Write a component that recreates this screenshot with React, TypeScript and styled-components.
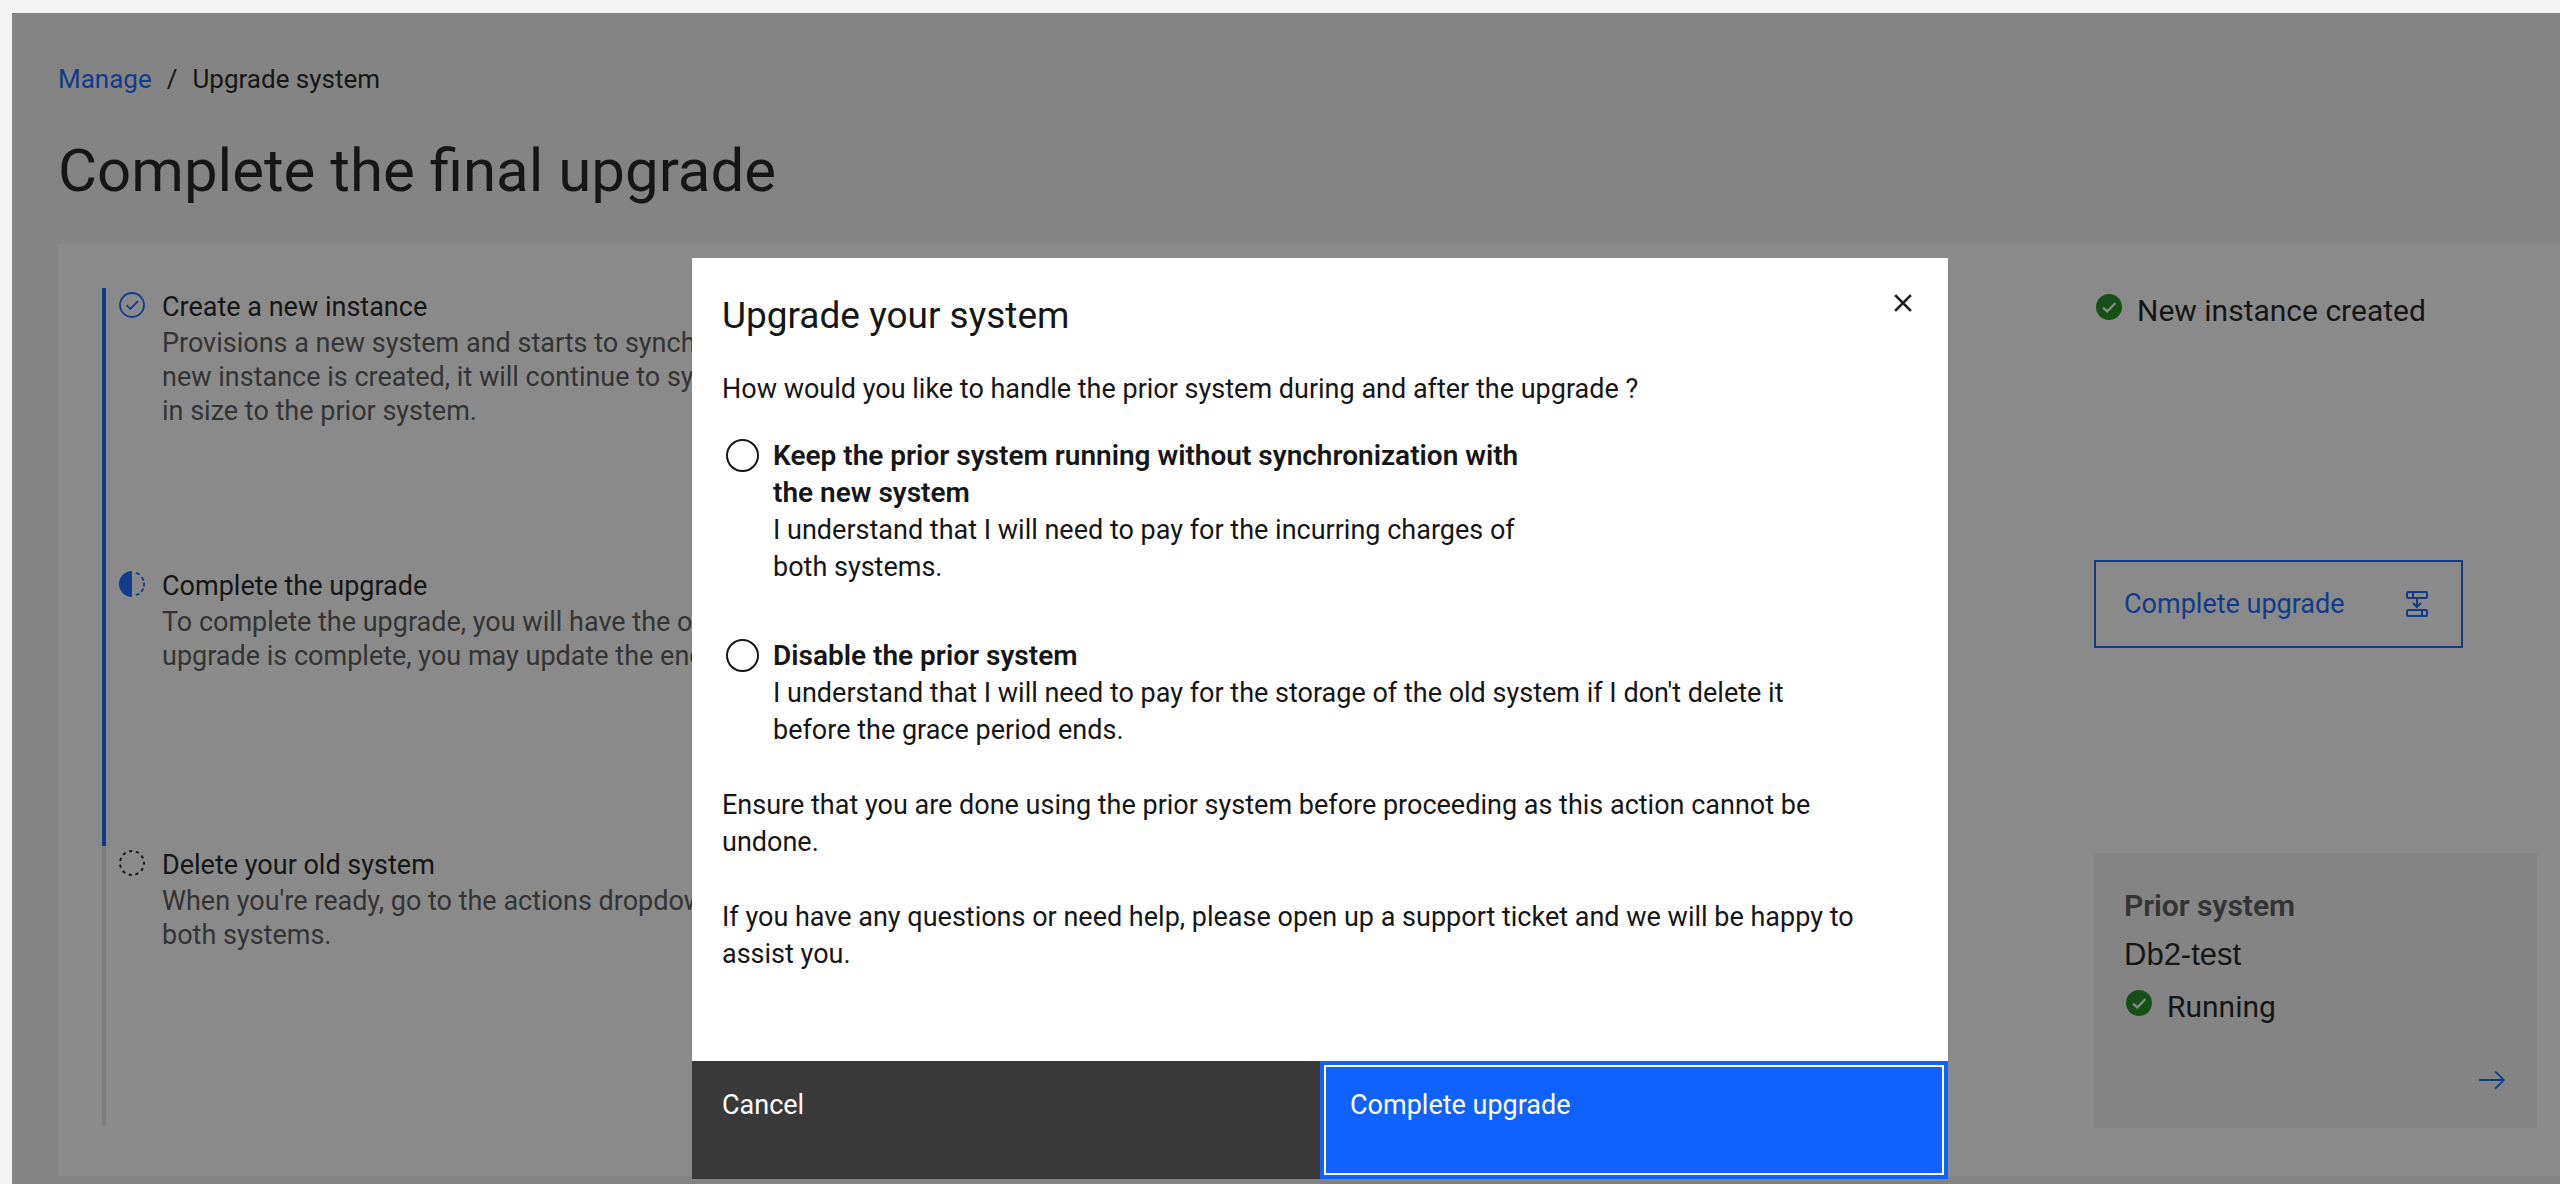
import React from 'react';
import styled, { createGlobalStyle } from 'styled-components';

const GlobalStyle = createGlobalStyle`
  *, *::before, *::after {
    box-sizing: border-box;
  }
  body {
    margin: 0;
    background: #f3f3f3;
    color: #161616;
    font-family: Roboto, 'Noto Sans', sans-serif;
    font-size: 27px;
    line-height: 37px;
  }
  h1, h2, h3, p, ol, fieldset {
    margin: 0;
    padding: 0;
    border: 0;
  }
  button, input {
    font: inherit;
    color: inherit;
    margin: 0;
    border-radius: 0;
  }
  svg {
    display: block;
    flex: none;
  }
`;

const Shell = styled.div`
  padding: 13px 0 0 12px;
`;

const Stage = styled.div`
  position: relative;
  overflow: hidden;
  background: #f3f3f3;
`;

const Page = styled.main`
  display: flex;
  flex-direction: column;
  min-height: calc(100vh - 13px);
  padding: 48px 0 0 46px;
`;

const Breadcrumb = styled.nav`
  display: flex;
  gap: 15px;
  font-size: 26px;
`;

const BreadcrumbLink = styled.a`
  color: #0f62fe;
  text-decoration: none;
`;

const PageTitle = styled.h1`
  margin: 35px 0;
  font-size: 60px;
  font-weight: 400;
  line-height: 76px;
`;

const Panel = styled.section`
  display: grid;
  grid-template-columns: minmax(0, 1fr) 466px;
  padding: 44px 0 48px 44px;
  background: #ffffff;
`;

const NextPanel = styled.section`
  flex: 1;
  margin-top: 9px;
  background: #ffffff;
`;

const Steps = styled.ol`
  list-style: none;
`;

const Step = styled.li<{ $reached: boolean }>`
  display: flex;
  gap: 17px;
  min-height: 279px;
  padding: 2px 0 0 13px;
  border-left: 4px solid ${(p) => (p.$reached ? '#0f62fe' : '#e0e0e0')};
`;

const StepIcon = styled.svg`
  width: 26px;
  height: 26px;
  margin-top: 2px;
`;

const StepTitle = styled.h2`
  margin-bottom: 2px;
  font-size: 27px;
  font-weight: 400;
  line-height: 34px;
`;

const StepLine = styled.span`
  display: block;
  color: #525252;
  line-height: 34px;
  white-space: nowrap;
`;

const Actions = styled.div`
  display: grid;
  grid-template-rows: 272px 293px auto;
  align-items: start;
  padding-right: 23px;
`;

const Status = styled.p`
  display: flex;
  gap: 15px;
  padding: 3px 0 0 2px;
  font-size: 30px;
  line-height: 40px;
`;

const StatusIcon = styled.svg`
  width: 26px;
  height: 26px;
  margin-top: 3px;
`;

const OutlineButton = styled.button`
  display: flex;
  align-items: center;
  justify-content: space-between;
  width: 369px;
  height: 88px;
  padding: 0 32px 0 28px;
  border: 2px solid #0f62fe;
  background: transparent;
  color: #0f62fe;
`;

const SystemCard = styled.article`
  display: flex;
  flex-direction: column;
  padding: 33px 30px;
  background: #f3f3f3;
`;

const CardLabel = styled.h3`
  color: #525252;
  font-size: 30px;
  font-weight: 600;
  line-height: 40px;
`;

const SystemName = styled.p`
  margin: 9px 0;
  font-family: 'Liberation Sans', Arial, sans-serif;
  font-size: 31px;
  line-height: 40px;
`;

const CardLink = styled.a`
  align-self: flex-end;
  margin-top: 38px;
  color: #0f62fe;
`;

const Overlay = styled.div`
  position: absolute;
  inset: 0;
  display: grid;
  grid-template-columns: 680fr 1256fr 612fr;
  align-items: start;
  padding-top: 245px;
  background: rgba(22, 22, 22, 0.5);
`;

const Dialog = styled.div`
  grid-column: 2;
  background: #ffffff;
`;

const DialogHeader = styled.header`
  display: flex;
  align-items: flex-start;
  justify-content: space-between;
  padding: 28px 28px 33px 30px;
`;

const DialogTitle = styled.h2`
  padding-top: 8px;
  font-size: 37px;
  font-weight: 400;
  line-height: 44px;
`;

const CloseButton = styled.button`
  padding: 0;
  border: 0;
  background: transparent;
`;

const DialogBody = styled.div`
  padding: 0 70px 88px 30px;
`;

const Options = styled.fieldset`
  display: grid;
  gap: 51px;
  margin-bottom: 38px;
`;

const Question = styled.legend`
  margin-bottom: 29px;
  padding: 0;
`;

const Option = styled.label<{ $width: number }>`
  display: flex;
  gap: 14px;
  max-width: ${(p) => p.$width}px;
  padding-left: 4px;
`;

const Radio = styled.input`
  flex: none;
  appearance: none;
  width: 33px;
  height: 33px;
  margin-top: 2px;
  border: 2px solid #161616;
  border-radius: 50%;

  &:checked {
    box-shadow: inset 0 0 0 7px #ffffff;
    background: #161616;
  }
`;

const OptionTitle = styled.strong`
  display: block;
  margin-bottom: 1px;
  font-size: 28px;
  font-weight: 600;
`;

const Note = styled.p`
  & + & {
    margin-top: 38px;
  }
`;

const DialogFooter = styled.footer`
  display: grid;
  grid-template-columns: 1fr 1fr;
`;

const FooterButton = styled.button<{ $primary?: boolean }>`
  height: 118px;
  padding: 26px 30px 55px;
  border: 0;
  background: ${(p) => (p.$primary ? '#0f62fe' : '#393939')};
  box-shadow: ${(p) => (p.$primary ? 'inset 0 0 0 4px #0f62fe, inset 0 0 0 6px #ffffff' : 'none')};
  color: #ffffff;
  text-align: left;
`;

type StepState = 'complete' | 'current' | 'upcoming';

const steps: { state: StepState; title: string; lines: string[] }[] = [
  {
    state: 'complete',
    title: 'Create a new instance',
    lines: [
      'Provisions a new system and starts to synchronize',
      'new instance is created, it will continue to sync',
      'in size to the prior system.',
    ],
  },
  {
    state: 'current',
    title: 'Complete the upgrade',
    lines: [
      'To complete the upgrade, you will have the option',
      'upgrade is complete, you may update the endpoint',
    ],
  },
  {
    state: 'upcoming',
    title: 'Delete your old system',
    lines: ["When you're ready, go to the actions dropdown", 'both systems.'],
  },
];

function StepMark({ state }: { state: StepState }) {
  if (state === 'complete') {
    return (
      <StepIcon viewBox="0 0 26 26" fill="none" stroke="#0f62fe" strokeWidth="1.8" aria-hidden="true">
        <circle cx="13" cy="13" r="12" />
        <path d="M7.5 13.2 11.3 17 19 9.2" />
      </StepIcon>
    );
  }
  if (state === 'current') {
    return (
      <StepIcon viewBox="0 0 26 26" fill="none" stroke="#0f62fe" strokeWidth="1.8" aria-hidden="true">
        <path d="M13 0A13 13 0 0 0 13 26Z" fill="#0f62fe" stroke="none" />
        <path d="M17 1.7l3.6 1.9M22.8 6l1.8 3.6M25 11.5v4M24.4 17.5l-2 3.4M20.4 22.6l-3.4 1.7" />
      </StepIcon>
    );
  }
  return (
    <StepIcon viewBox="0 0 26 26" fill="none" stroke="#161616" strokeWidth="2" aria-hidden="true">
      <circle cx="13" cy="13" r="12" strokeDasharray="3.2 3.65" strokeDashoffset="1.6" />
    </StepIcon>
  );
}

function CheckFilled() {
  return (
    <StatusIcon viewBox="0 0 26 26" aria-hidden="true">
      <circle cx="13" cy="13" r="13" fill="#198a19" />
      <path d="M7 13.6 11.2 17.4 19.4 9" fill="none" stroke="#ffffff" strokeWidth="2.2" />
    </StatusIcon>
  );
}

export default function App() {
  return (
    <>
      <GlobalStyle />
      <Shell>
        <Stage>
          <Page>
            <Breadcrumb aria-label="Breadcrumb">
              <BreadcrumbLink href="#manage">Manage</BreadcrumbLink>
              <span>/</span>
              <span>Upgrade system</span>
            </Breadcrumb>
            <PageTitle>Complete the final upgrade</PageTitle>
            <Panel>
              <Steps>
                {steps.map((step) => (
                  <Step key={step.title} $reached={step.state !== 'upcoming'}>
                    <StepMark state={step.state} />
                    <div>
                      <StepTitle>{step.title}</StepTitle>
                      <p>
                        {step.lines.map((line) => (
                          <StepLine key={line}>{line}</StepLine>
                        ))}
                      </p>
                    </div>
                  </Step>
                ))}
              </Steps>
              <Actions>
                <Status>
                  <CheckFilled />
                  New instance created
                </Status>
                <OutlineButton type="button">
                  Complete upgrade
                  <svg width="24" height="26" viewBox="0 0 24 26" fill="none" stroke="currentColor" strokeWidth="2" aria-hidden="true">
                    <rect x="2" y="1" width="20" height="6" rx="1" />
                    <path d="M8 1v6M12 7v9M8 12l4 4 4-4" />
                    <rect x="2" y="19" width="20" height="6" rx="1" />
                    <path d="M17 19v6" />
                  </svg>
                </OutlineButton>
                <SystemCard>
                  <CardLabel>Prior system</CardLabel>
                  <SystemName>Db2-test</SystemName>
                  <Status>
                    <CheckFilled />
                    Running
                  </Status>
                  <CardLink href="#prior-system" aria-label="Open prior system">
                    <svg width="30" height="30" viewBox="0 0 16 16" fill="currentColor" aria-hidden="true">
                      <path d="M9.3 3.7 13.1 7.5H1v1h12.1L9.3 12.3 10 13l5-5-5-5z" />
                    </svg>
                  </CardLink>
                </SystemCard>
              </Actions>
            </Panel>
            <NextPanel />
          </Page>
          <Overlay>
            <Dialog role="dialog" aria-modal="true" aria-labelledby="dialog-title">
              <DialogHeader>
                <DialogTitle id="dialog-title">Upgrade your system</DialogTitle>
                <CloseButton type="button" aria-label="Close">
                  <svg width="34" height="34" viewBox="0 0 32 32" fill="#161616" stroke="#161616" strokeWidth="0.5" aria-hidden="true">
                    <path d="M24 9.4 22.6 8 16 14.6 9.4 8 8 9.4l6.6 6.6L8 22.6 9.4 24l6.6-6.6 6.6 6.6 1.4-1.4-6.6-6.6L24 9.4z" />
                  </svg>
                </CloseButton>
              </DialogHeader>
              <DialogBody>
                <Options>
                  <Question>How would you like to handle the prior system during and after the upgrade ?</Question>
                  <Option $width={820}>
                    <Radio type="radio" name="prior-system" value="keep" />
                    <span>
                      <OptionTitle>Keep the prior system running without synchronization with the new system</OptionTitle>
                      I understand that I will need to pay for the incurring charges of both systems.
                    </span>
                  </Option>
                  <Option $width={1120}>
                    <Radio type="radio" name="prior-system" value="disable" />
                    <span>
                      <OptionTitle>Disable the prior system</OptionTitle>
                      I understand that I will need to pay for the storage of the old system if I don't delete it
                      before the grace period ends.
                    </span>
                  </Option>
                </Options>
                <Note>
                  Ensure that you are done using the prior system before proceeding as this action cannot be undone.
                </Note>
                <Note>
                  If you have any questions or need help, please open up a support ticket and we will be happy to
                  assist you.
                </Note>
              </DialogBody>
              <DialogFooter>
                <FooterButton type="button">Cancel</FooterButton>
                <FooterButton type="button" $primary>
                  Complete upgrade
                </FooterButton>
              </DialogFooter>
            </Dialog>
          </Overlay>
        </Stage>
      </Shell>
    </>
  );
}
